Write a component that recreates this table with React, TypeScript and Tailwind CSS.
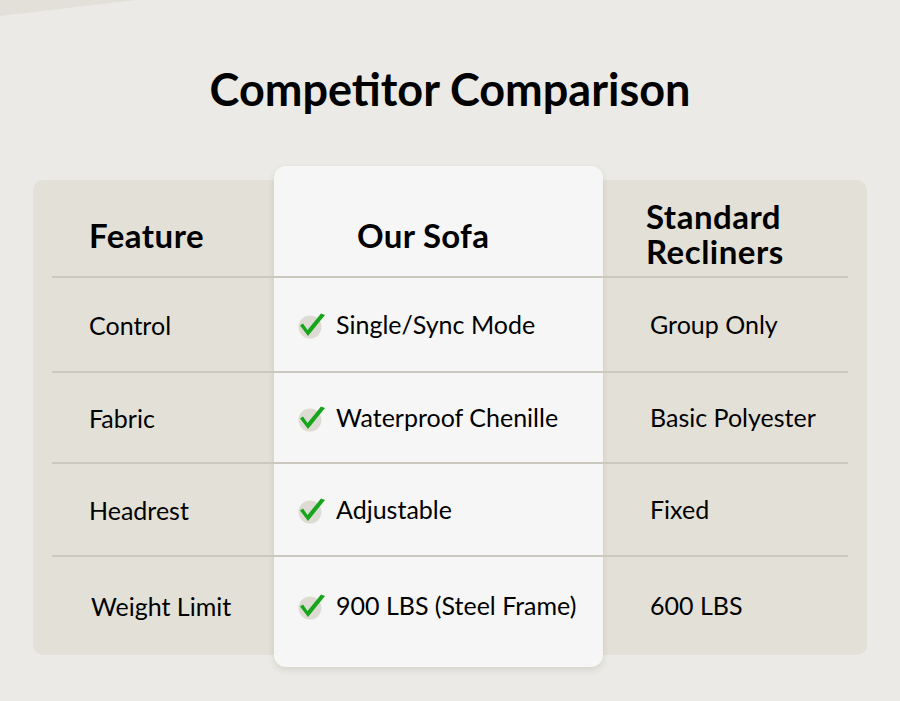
const rows = [
  { feature: "Control", ours: "Single/Sync Mode", theirs: "Group Only", h: "h-[95px]" },
  { feature: "Fabric", ours: "Waterproof Chenille", theirs: "Basic Polyester", h: "h-[91px]" },
  { feature: "Headrest", ours: "Adjustable", theirs: "Fixed", h: "h-[93px]" },
  { feature: "Weight Limit", ours: "900 LBS (Steel Frame)", theirs: "600 LBS", h: "h-[98px]" },
];

function CheckIcon() {
  return (
    <svg width="30" height="28" viewBox="0 0 30 28" className="shrink-0">
      <circle cx="12" cy="16" r="11.5" fill="#dddbd4" />
      <path d="M2 14.5 L5 12.5 L9.5 19 L23 2.5 L27 4 L10 25 Z" fill="#17a51b" />
    </svg>
  );
}

export default function App() {
  return (
    <div className="relative w-[900px] h-[701px] overflow-hidden bg-[#ebeae6] font-['Lato',sans-serif] text-black">
      <svg className="absolute left-0 top-0" width="140" height="20" viewBox="0 0 140 20">
        <polygon points="0,0 136,0 0,16" fill="#e2e0d8" />
      </svg>

      <h1 className="pt-[60px] text-center text-[45px] font-bold leading-[58px]">
        Competitor Comparison
      </h1>

      <div className="relative mx-[33px] mt-[62px] h-[475px] rounded-[10px] bg-[#e3e0d8] px-[19px]">
        {/* highlighted column card */}
        <div className="absolute left-[241px] top-[-14px] w-[329px] h-[501px] rounded-[12px] bg-[#f6f6f6] shadow-[0_3px_6px_rgba(120,110,90,0.18)]" />

        <div className="relative">
          <div className="grid h-[98px] grid-cols-[222px_329px_246px] border-b-2 border-[#cbc8bf]">
            <div className="flex items-center pl-[37px] pt-[15px] text-[33px] font-bold tracking-[0.5px]">Feature</div>
            <div className="flex items-center pl-[83px] pt-[15px] text-[33px] font-bold tracking-[0.3px]">Our Sofa</div>
            <div className="flex flex-col justify-center pl-[43px] pt-[12px] text-[33px] font-bold leading-[35px] tracking-[0.5px]">
              <span>Standard</span>
              <span>Recliners</span>
            </div>
          </div>

          {rows.map((r, i) => (
            <div
              key={r.feature}
              className={`grid grid-cols-[222px_329px_246px] ${r.h} ${i < rows.length - 1 ? "border-b-2 border-[#cbc8bf]" : ""}`}
            >
              <div className={`flex items-center pt-[2px] text-[25px] ${i === 3 ? "pl-[39px]" : "pl-[37px]"}`}>{r.feature}</div>
              <div className="flex items-center gap-[8px] pl-[24px] text-[25px]">
                <CheckIcon />
                <span>{r.ours}</span>
              </div>
              <div className="flex items-center pl-[47px] text-[25px]">{r.theirs}</div>
            </div>
          ))}
        </div>
      </div>
    </div>
  );
}
